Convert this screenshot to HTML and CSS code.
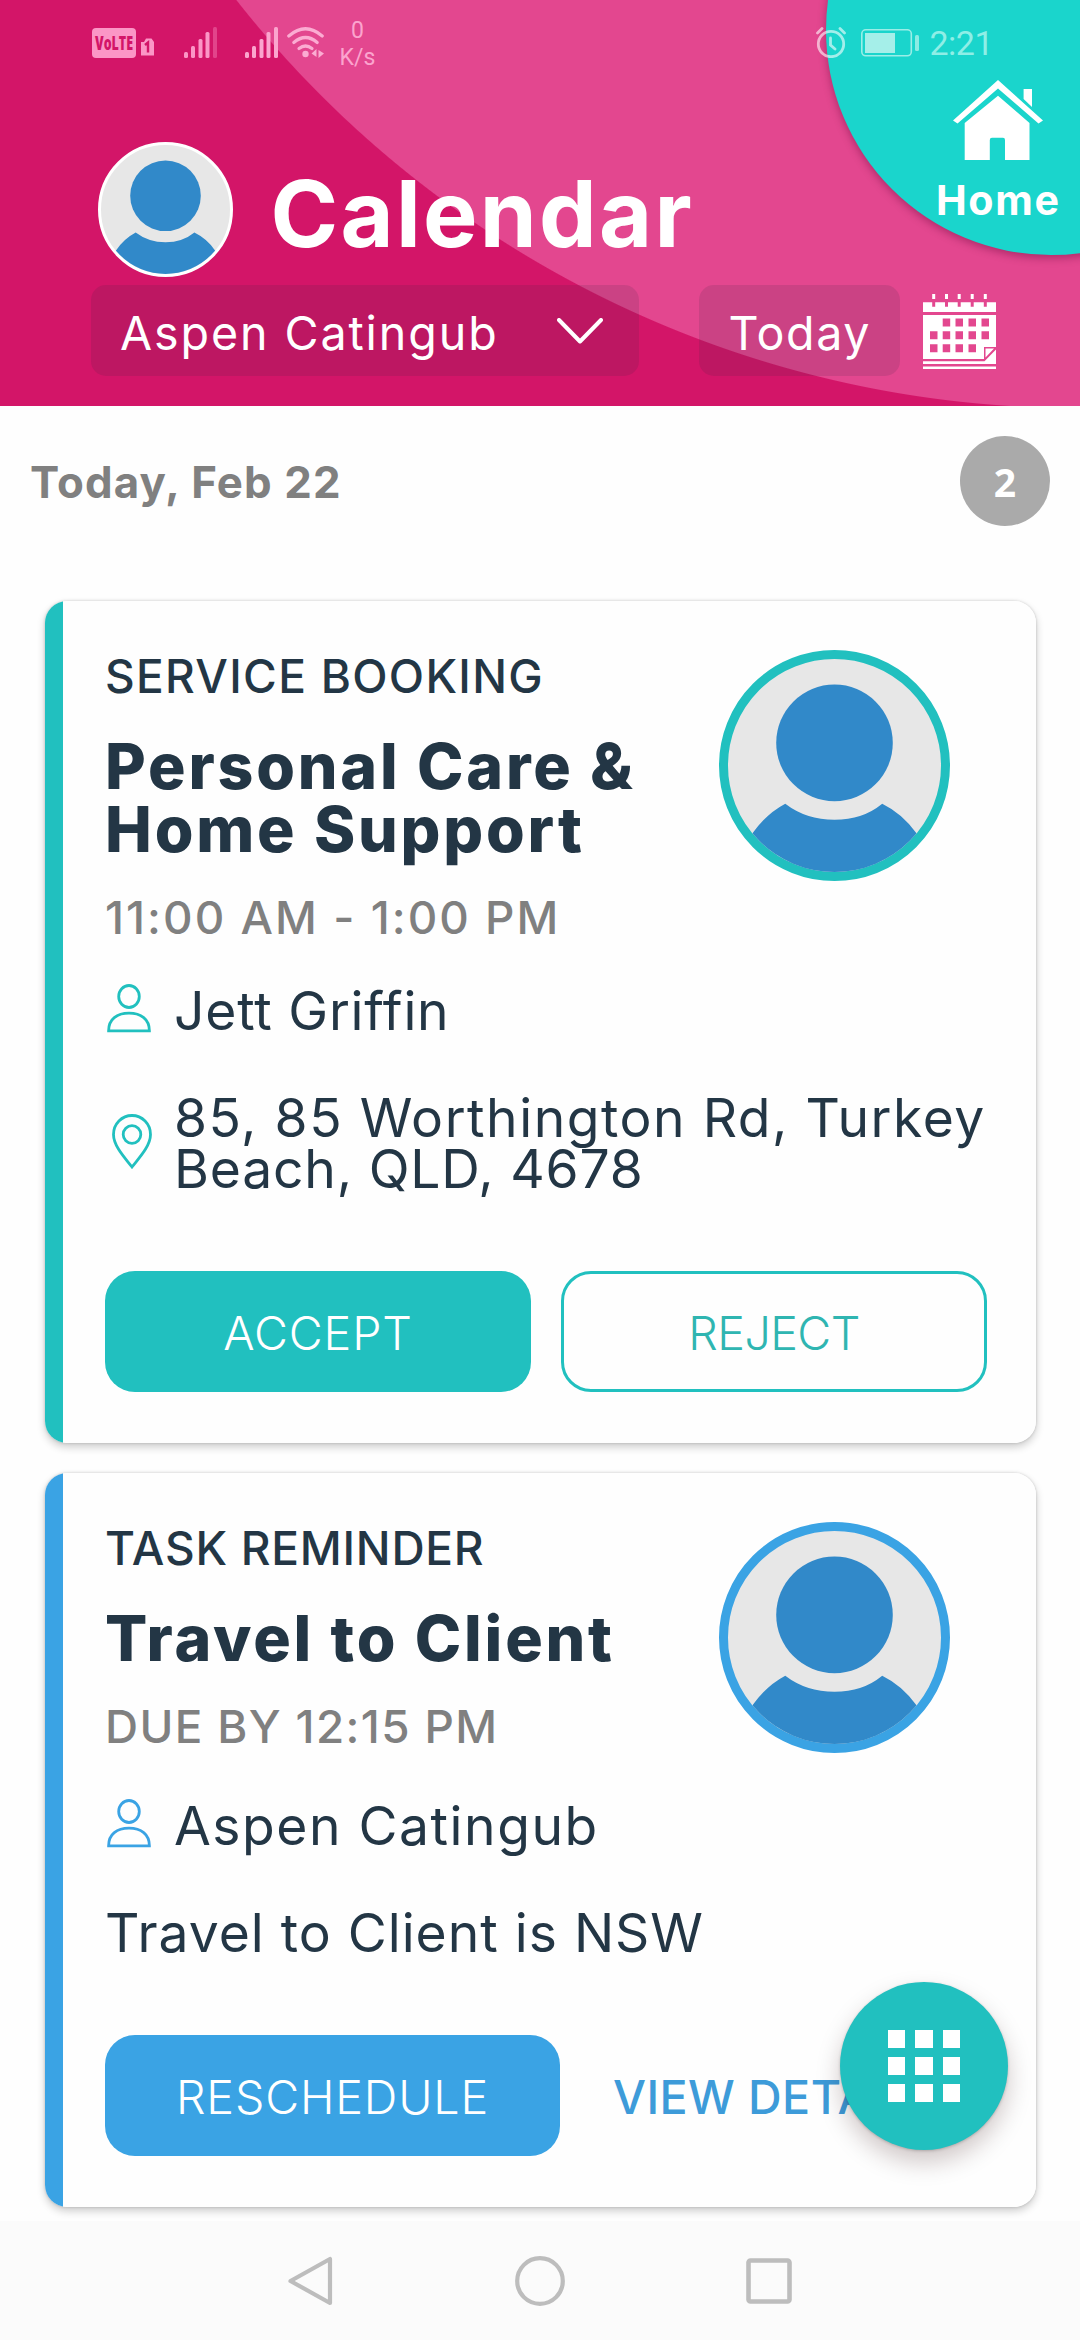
FILE: index.html
```html
<!DOCTYPE html>
<html lang="en">
<head>
<meta charset="utf-8">
<title>Calendar</title>
<link rel="stylesheet" href="styles.css">
</head>
<body>
<svg class="defs" width="0" height="0" aria-hidden="true">
  <symbol id="avatar" viewBox="0 0 212 212">
    <circle cx="106" cy="83.500" r="58" fill="#3189c9"/>
    <path d="M57 144Q78 160 106 160Q134 160 153.500 144Q174 154 188 174L196 212H16L24 174Q38 154 57 144Z" fill="#3189c9"/>
  </symbol>
  <symbol id="person" viewBox="0 0 44 49">
    <ellipse cx="22" cy="12.500" rx="10.300" ry="11" fill="none" stroke="currentColor" stroke-width="2.800"/>
    <path d="M1.600 46.800C1.600 35 10 29.200 22 29.200S42.400 35 42.400 46.800Z" fill="none" stroke="currentColor" stroke-width="2.800"/>
  </symbol>
</svg>

<header class="header">
  <div class="home">
    <svg class="home-icon" viewBox="0 0 90 80" fill="#fff">
      <path d="M45 0L90 40.500L85.500 43.500L45 8.500L4.500 43.500L0 40.500Z"/>
      <path d="M70.600 9H79V27L70.600 19Z"/>
      <path d="M45 15.700L76.500 43V80H52V60Q52 57.700 50 57.700H39Q36.800 57.700 36.800 60V80H11.700V43Z"/>
    </svg>
    <span class="home-label">Home</span>
  </div>

  <div class="status">
    <svg class="volte" viewBox="0 0 44 30"><rect width="44" height="30" rx="4" fill="#fb96c6"/><text x="3" y="22" textLength="38" lengthAdjust="spacingAndGlyphs">VoLTE</text></svg>
    <svg class="sim" viewBox="0 0 13 17"><path d="M0 3.500H3L5 0H10.500L13 3.500V17H0Z" fill="#fb96c6"/><path d="M4 6.500L7 4V14" fill="none" stroke="#d31568" stroke-width="2.400"/></svg>
    <svg class="signal" viewBox="0 0 33 31"><g fill="#fb96c6"><rect y="25" width="4" height="6" rx="1.500"/><rect x="7" y="19" width="4" height="12" rx="1.500"/><rect x="14.500" y="12" width="4" height="19" rx="1.500"/><rect x="21.500" y="5" width="4" height="26" rx="1.500"/></g><rect x="29" width="4" height="31" rx="1.500" fill="#e2448b"/></svg>
    <svg class="signal second" viewBox="0 0 33 31"><g fill="#fba5ce"><rect y="25" width="4" height="6" rx="1.500"/><rect x="7" y="19" width="4" height="12" rx="1.500"/><rect x="14.500" y="12" width="4" height="19" rx="1.500"/><rect x="21.500" y="5" width="4" height="26" rx="1.500"/><rect x="29" width="4" height="31" rx="1.500"/></g></svg>
    <svg class="wifi" viewBox="0 0 37 31"><g fill="none" stroke="#fbacd2" stroke-width="3.200" stroke-linecap="round"><path d="M1.800 9Q18.500-5.500 35.200 9"/><path d="M6.800 15.500Q18.500 5.500 30.200 15.500"/><path d="M12 21.500Q18.500 16.500 25 21.500"/></g><circle cx="18.500" cy="27" r="3.200" fill="#fbacd2"/><path d="M29.500 22V30L24.500 26.500ZM31.500 23L37 26.500L31.500 31Z" fill="#fbacd2"/></svg>
    <span class="speed">0<br>K/s</span>
    <svg class="alarm" viewBox="0 0 30 31"><g fill="none" stroke="#fff" stroke-opacity=".6" stroke-width="2.800" stroke-linecap="round"><circle cx="15" cy="17" r="12.700"/><path d="M1.500 6L6 1.500M28.500 6L24 1.500M14.500 11V18L19 22"/></g></svg>
    <svg class="battery" viewBox="0 0 59 28"><rect x=".800" y=".800" width="49.500" height="26" rx="4" fill="none" stroke="#9aeee7" stroke-width="1.600"/><rect x="4" y="4" width="30" height="20" fill="#a5efe9"/><rect x="54" y="6" width="4" height="16" rx="1.500" fill="#8cece4"/></svg>
    <span class="clock">2:21</span>
  </div>

  <div class="title-row">
    <svg class="avatar-small" viewBox="0 0 212 212"><use href="#avatar"/></svg>
    <h1 class="title">Calendar</h1>
  </div>

  <div class="controls">
    <div class="select">
      <span>Aspen Catingub</span>
      <svg class="chevron" viewBox="0 0 46 26"><path d="M2 2L23 23.500L44 2" fill="none" stroke="#fff" stroke-width="4" stroke-linecap="round" stroke-linejoin="round"/></svg>
    </div>
    <div class="today">Today</div>
    <svg class="calendar-icon" viewBox="0 0 73 75">
      <path fill="#fff" d="M9.200 0h3v5h-3zM22 0h3v5h-3zM34.700 0h3v5h-3zM47.700 0h3v5h-3zM60.800 0h3v5h-3zM0 8.300h9.200v4.500h3v-4.500H22v4.500h3v-4.500h9.700v4.500h3v-4.500h10v4.500h3v-4.500h10.100v4.500h3v-4.500H73v9.700H0z"/>
      <path fill="#fff" fill-rule="evenodd" d="M0 21H73V53H61V65H0ZM19.700 24.500v8h7.500v-8zM32.500 24.500v8H40v-8zM45.500 24.500v8H53v-8zM58.500 24.500v8H66v-8zM7 37.200v8h7.500v-8zM19.700 37.200v8h7.500v-8zM32.500 37.200v8H40v-8zM45.500 37.200v8H53v-8zM58.500 37.200v8H66v-8zM7 50.300v8h7.500v-8zM19.700 50.300v8h7.500v-8zM32.500 50.300v8H40v-8zM45.500 50.300v8H53v-8z"/>
      <path fill="#fff" d="M62.500 54.500H71L62.500 63.500ZM73 55.500V70H0V67.300H61.500ZM0 72.500H73V75H0Z"/>
    </svg>
  </div>
</header>

<main class="main">
  <div class="day">
    <h2 class="day-name">Today, Feb 22</h2>
    <span class="count">2</span>
  </div>

  <article class="card teal">
    <div class="card-top">
      <div class="card-text">
        <div class="eyebrow">SERVICE BOOKING</div>
        <h3 class="name">Personal Care &amp;<br>Home Support</h3>
        <div class="time">11:00 AM - 1:00 PM</div>
      </div>
      <svg class="avatar" viewBox="0 0 212 212"><use href="#avatar"/></svg>
    </div>
    <div class="row">
      <svg class="person-icon"><use href="#person"/></svg>
      <span class="jett">Jett Griffin</span>
    </div>
    <div class="row address">
      <svg class="pin" viewBox="0 0 40 55"><path d="M20 53C13 44 1.500 32 1.500 20.500a18.500 19 0 0 1 37 0C38.500 32 27 44 20 53Z" fill="none" stroke="currentColor" stroke-width="2.800"/><circle cx="20" cy="20.500" r="8.800" fill="none" stroke="currentColor" stroke-width="2.800"/></svg>
      <span>85, 85 Worthington Rd, Turkey<br><span class="locality">Beach, QLD, 4678</span></span>
    </div>
    <div class="actions">
      <button class="btn fill">ACCEPT</button>
      <button class="btn outline">REJECT</button>
    </div>
  </article>

  <article class="card blue">
    <div class="card-top">
      <div class="card-text">
        <div class="eyebrow task">TASK REMINDER</div>
        <h3 class="name">Travel to Client</h3>
        <div class="time due">DUE BY 12:15 PM</div>
      </div>
      <svg class="avatar" viewBox="0 0 212 212"><use href="#avatar"/></svg>
    </div>
    <div class="row">
      <svg class="person-icon"><use href="#person"/></svg>
      <span>Aspen Catingub</span>
    </div>
    <p class="note">Travel to Client is NSW</p>
    <div class="actions">
      <button class="btn fill wide">RESCHEDULE</button>
      <button class="btn link">VIEW DETAILS</button>
    </div>
  </article>
</main>

<div class="fab">
  <i></i><i></i><i></i><i></i><i></i><i></i><i></i><i></i><i></i>
</div>

<nav class="nav">
  <svg viewBox="0 0 50 50"><path d="M44 3V47L4.500 25Z" fill="none" stroke="#bdbdbd" stroke-width="4.200" stroke-linejoin="round"/></svg>
  <svg viewBox="0 0 50 50"><circle cx="25" cy="25" r="22.800" fill="none" stroke="#bdbdbd" stroke-width="4.200"/></svg>
  <svg viewBox="0 0 50 50"><rect x="4.500" y="4.500" width="41" height="41" rx="2" fill="none" stroke="#bdbdbd" stroke-width="4.600"/></svg>
</nav>
</body>
</html>
```
FILE: styles.css
```css
* { box-sizing: border-box; }
body {
  margin: 0;
  width: 1080px;
  height: 2340px;
  overflow: hidden;
  position: relative;
  display: flex;
  flex-direction: column;
  background: #fefefe;
  color: #233645;
  font-family: Inter, "Liberation Sans", sans-serif;
}
h1, h2, h3, p { margin: 0; font-weight: inherit; }
svg { display: block; flex: none; }
.defs { position: absolute; }

/* Header */
.header {
  position: relative;
  height: 406px;
  flex: none;
  overflow: hidden;
  background: radial-gradient(circle at 1076px -660px, #e3478f 1067.5px, #d31568 1068.5px);
  color: #fff;
}
.home {
  position: absolute;
  left: 826px;
  top: -195px;
  width: 450px;
  height: 450px;
  border-radius: 50%;
  background: #1ad5cc;
  box-shadow: 0 3px 8px rgba(90, 0, 50, .4);
  padding: 275px 0 0 110px;
}
.home-icon { width: 90px; height: 80px; margin-left: 16.500px; }
.home-label {
  display: block;
  margin-top: 15px;
  font-size: 41.200px;
  font-weight: 700;
  line-height: 50px;
  letter-spacing: 1.600px;
}
.status {
  position: relative;
  display: flex;
  align-items: flex-start;
  height: 142px;
  padding: 27px 0 0 92px;
}
.volte {
  width: 44px;
  height: 30px;
  margin-top: 1px;
  fill: #d31568;
  font: 800 19.500px "Open Sans", sans-serif;
}
.sim { width: 13px; height: 18px; margin: 11px 0 0 5px; }
.signal { width: 33px; height: 31px; margin-left: 29.500px; }
.signal.second { margin-left: 28px; }
.wifi { width: 37px; height: 31px; margin-left: 9px; }
.speed {
  width: 60px;
  margin: -10.500px 0 0 4px;
  font: 400 23px/27px Roboto, sans-serif;
  text-align: center;
  color: #fba4ce;
}
.alarm { width: 30px; height: 31px; margin-left: 428px; }
.battery { width: 59px; height: 28px; margin: 2px 0 0 15px; }
.clock {
  margin: -4px 0 0 10px;
  font: 400 34px/40px Roboto, sans-serif;
  letter-spacing: -.5px;
  color: #8feee6;
}
.title-row { position: relative; display: flex; height: 143px; padding-left: 98px; }
.avatar-small {
  width: 135px;
  height: 135px;
  border: 3px solid #fff;
  border-radius: 50%;
  background: #e7e7e7;
}
.title {
  margin-left: 37.500px;
  font-size: 91.500px;
  font-weight: 700;
  line-height: 144px;
  letter-spacing: 2.300px;
}
.controls {
  display: flex;
  align-items: flex-start;
  padding-left: 91px;
  font-size: 46.600px;
  font-weight: 400;
}
.select, .today {
  display: flex;
  height: 91px;
  border-radius: 15px;
  background: rgba(50, 35, 60, .13);
  line-height: 96px;
  letter-spacing: 1.900px;
}
.select { width: 547.500px; padding: 0 35.500px 0 29px; justify-content: space-between; }
.chevron { width: 46px; height: 26px; margin-top: 33px; }
.today { width: 200.500px; margin-left: 60.500px; padding-left: 29.500px; letter-spacing: 1.600px; }
.calendar-icon { width: 73px; height: 75px; margin: 9px 0 0 23.500px; }

/* Day list */
.main { flex: 1; min-height: 0; padding: 30px 44px 0 45px; }
.day {
  display: flex;
  justify-content: space-between;
  height: 90px;
  margin: 0 -14px 75px -15px;
  color: #808080;
}
.day-name { font-size: 43.800px; font-weight: 700; line-height: 94px; letter-spacing: 1.130px; }
.count {
  width: 90px;
  border-radius: 50%;
  background: #aaa;
  color: #fff;
  font: 700 39px/92px "Open Sans", sans-serif;
  text-align: center;
}

/* Cards */
.card {
  --accent: #21c0bf;
  margin-bottom: 30px;
  padding: 50px 48.500px 51.500px 60px;
  border-radius: 22px;
  background: linear-gradient(90deg, var(--accent) 18px, #fefefe 18px);
  box-shadow: 0 4px 8px rgba(0, 0, 0, .2), 0 0 3px rgba(0, 0, 0, .18);
}
.blue { --accent: #3aa3e4; }
.card-top { display: flex; justify-content: space-between; }
.eyebrow { font-size: 46px; font-weight: 500; line-height: 50px; letter-spacing: 1.300px; }
.task { letter-spacing: .75px; }
.name {
  margin-top: 33.500px;
  font-size: 62.600px;
  font-weight: 800;
  line-height: 63px;
  letter-spacing: 2.800px;
  white-space: nowrap;
}
.time {
  margin-top: 32px;
  color: #808080;
  font-size: 45.800px;
  font-weight: 500;
  line-height: 50px;
  letter-spacing: 2.050px;
}
.due { letter-spacing: 1.380px; }
.avatar {
  width: 231px;
  height: 231px;
  margin: -1px 38px 5px 0;
  border: 9px solid var(--accent);
  border-radius: 50%;
  background: #e7e7e7;
}
.row {
  display: flex;
  margin-top: 43px;
  font-size: 53.400px;
  font-weight: 400;
  line-height: 50.500px;
  letter-spacing: 1.530px;
  white-space: nowrap;
}
.person-icon { width: 44px; height: 49px; margin: -2px 23px 0 2px; color: var(--accent); }
.jett { letter-spacing: .8px; }
.address { margin-top: 57px; }
.locality { letter-spacing: .8px; }
.pin { width: 40px; height: 55px; margin: 21px 22px 0 7px; color: var(--accent); }
.note {
  margin-top: 56px;
  font-size: 53.400px;
  font-weight: 400;
  line-height: 50.500px;
  letter-spacing: 1px;
}
.actions { display: flex; gap: 30px; margin-top: 77px; }
.btn {
  flex: 0 0 426px;
  height: 120.500px;
  padding: 5px 0 0;
  border: 0;
  border-radius: 30px;
  background: none;
  font: 300 46.600px/1 Inter, sans-serif;
  letter-spacing: .85px;
  white-space: nowrap;
}
.fill { background: var(--accent); color: #fff; }
.outline { border: 3px solid var(--accent); color: #2fb5b1; letter-spacing: -.6px; }
.wide { flex-basis: 455px; }
.link { flex: none; padding-left: 23px; color: #3d9bd9; font-weight: 500; letter-spacing: .42px; }

/* Floating menu button */
.fab {
  position: absolute;
  left: 840px;
  top: 1982px;
  width: 168px;
  height: 168px;
  display: grid;
  grid-template-columns: repeat(3, 17.500px);
  grid-auto-rows: 18px;
  gap: 9px 9.800px;
  place-content: center;
  border-radius: 50%;
  background: #21c0bf;
  box-shadow: 0 12px 24px rgba(40, 0, 0, .22), 0 1px 3px rgba(0, 0, 0, .2);
}
.fab i { background: #fff; }

/* System navigation */
.nav {
  display: flex;
  justify-content: center;
  gap: 179px;
  height: 119px;
  flex: none;
  padding-top: 35px;
  background: #fbfbfb;
}
.nav svg { width: 50px; height: 50px; }
```
